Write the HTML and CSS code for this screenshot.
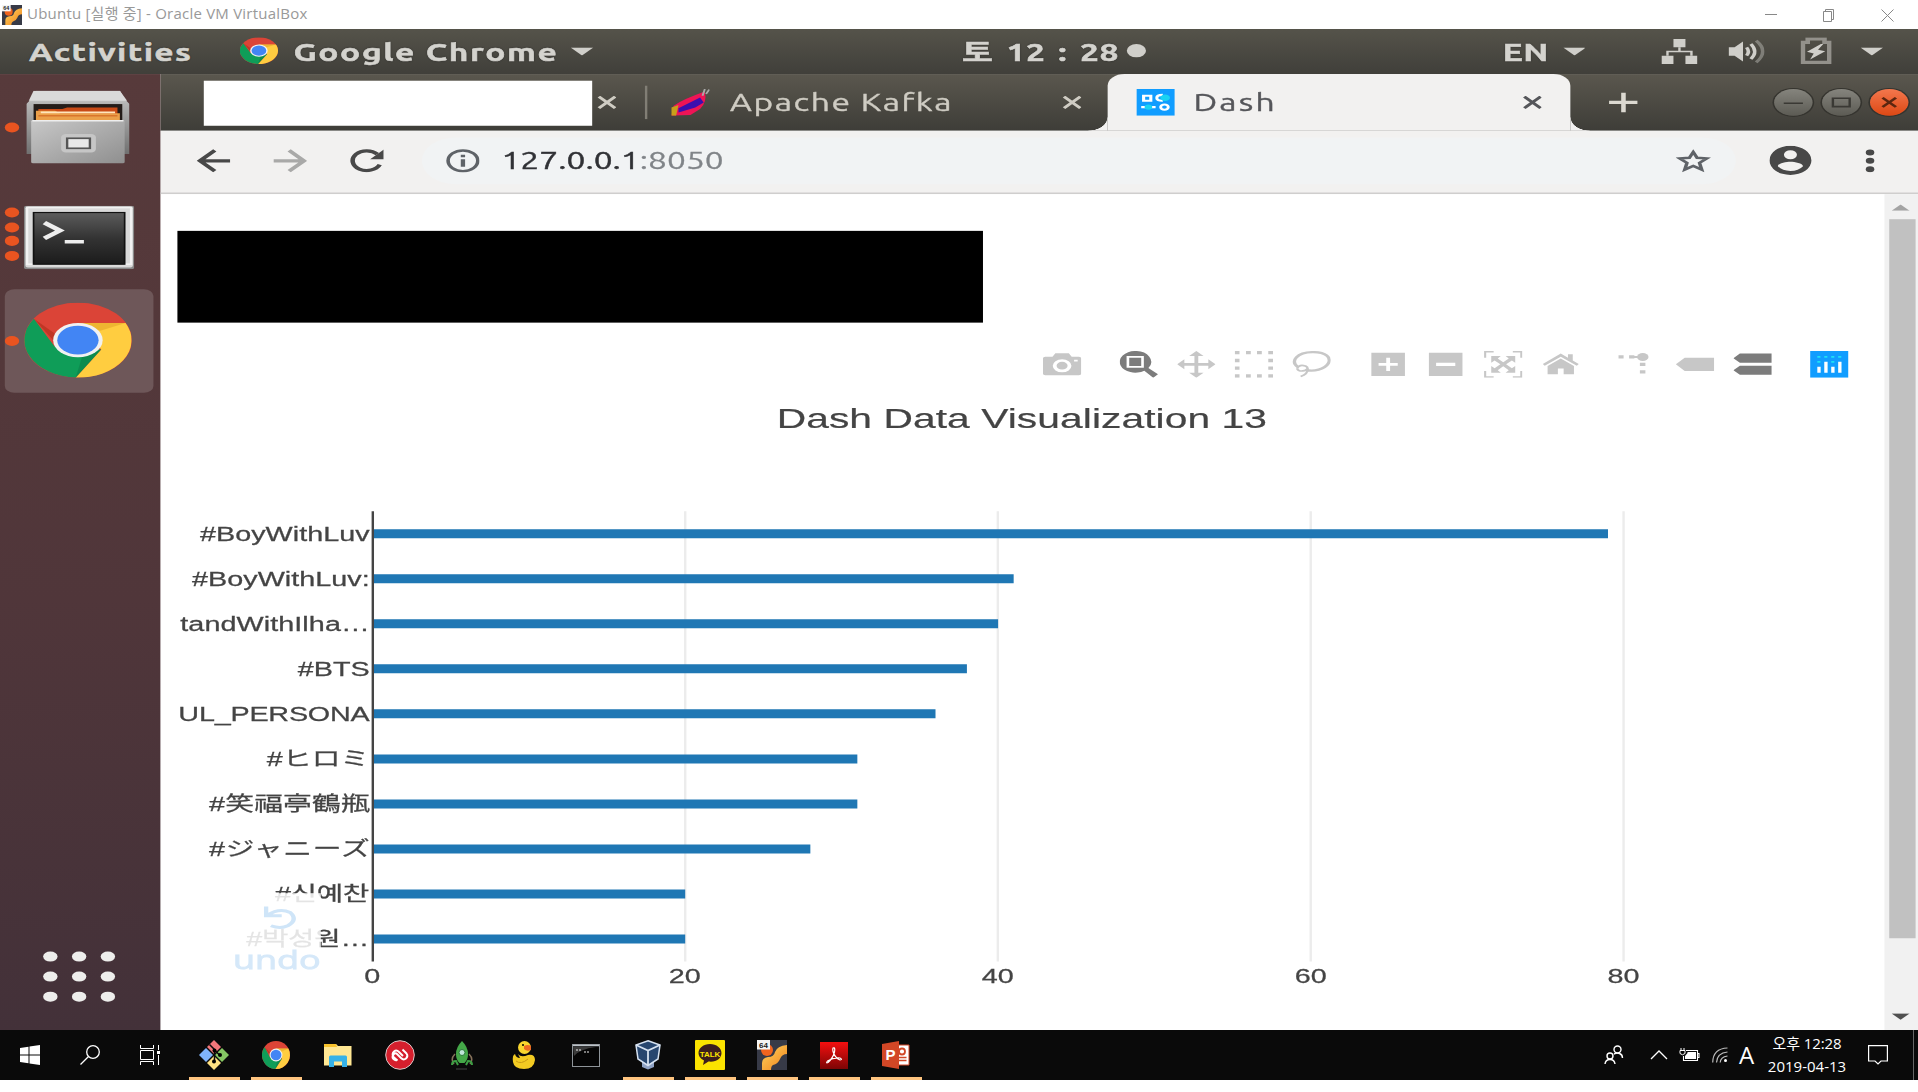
FILE: index.html
```html
<!DOCTYPE html>
<html lang="ko">
<head>
<meta charset="utf-8">
<title>Ubuntu - Oracle VM VirtualBox</title>
<link rel="stylesheet" href="styles.css">
</head>
<body>
<svg class="defs" width="0" height="0">
  <defs>
    <linearGradient id="metal" x1="0" y1="0" x2="1" y2="1"><stop offset="0" stop-color="#c8c8c8"/><stop offset="1" stop-color="#8f8f8f"/></linearGradient>
    <linearGradient id="side" x1="0" y1="0" x2="0" y2="1"><stop offset="0" stop-color="#e0e0e0"/><stop offset=".2" stop-color="#b5b5b5"/><stop offset="1" stop-color="#707070"/></linearGradient>
    <linearGradient id="term" x1="0" y1="0" x2="0" y2="1"><stop offset="0" stop-color="#5c5c5c"/><stop offset=".5" stop-color="#333"/><stop offset="1" stop-color="#1b1b1b"/></linearGradient>
    <linearGradient id="red" x1="0" y1="0" x2="0" y2="1"><stop offset="0" stop-color="#f50f0f"/><stop offset="1" stop-color="#7c0505"/></linearGradient>
    <linearGradient id="vm" x1="0" y1="0" x2="1" y2="1"><stop offset="0" stop-color="#ffd65e"/><stop offset="1" stop-color="#f0811c"/></linearGradient>
    <symbol id="chrome" viewBox="0 0 48 48">
      <circle cx="24" cy="24" r="24" fill="#db4437"/>
      <path d="M4.400 10.400A24 24 0 0 0 23 48L34.400 30H24L13.600 28Z" fill="#0f9d58"/>
      <path d="M23 48A24 24 0 0 0 45.200 13H24L34.400 30Z" fill="#ffcd40"/>
      <path d="M24 13H45.200L34 18Z" fill="#d99b20" opacity=".45"/>
      <path d="M4.400 10.400L13.600 25L14 20Z" fill="#a52714" opacity=".5"/>
      <path d="M23 48L34.400 30L26 34Z" fill="#0a7040" opacity=".4"/>
      <circle cx="24" cy="24" r="11" fill="#f1f1f1"/><circle cx="24" cy="24" r="9.200" fill="#4285f4"/>
    </symbol>
    <symbol id="cross" viewBox="0 0 8 8"><path d="M.6.6L7.400 7.400M7.400.6L.6 7.400" fill="none" stroke="currentColor" stroke-width="1.500"/></symbol>
    <symbol id="tri" viewBox="0 0 10 5"><path d="M0 0H10L5 5Z" fill="currentColor"/></symbol>
    <symbol id="vmware" viewBox="0 0 30 30">
      <rect width="30" height="30" fill="#373a47"/><circle cx="10" cy="10" r="6" fill="#f0641e"/>
      <path d="M5 30V23Q5 18 11 17Q17 17 18 12Q20 6 30 5V14Q25 14 23 19Q21 24 16 25Q14 26 14 30Z" fill="url(#vm)"/>
      <rect width="13" height="9.500" fill="#f4f4f4"/><text x="6.500" y="7.600" text-anchor="middle" class="vm-num">64</text>
    </symbol>
  </defs>
</svg>

<header class="titlebar">
  <svg class="app" width="20" height="20"><use href="#vmware"/></svg>
  <span class="title">Ubuntu [실행 중] - Oracle VM VirtualBox</span>
  <svg class="controls" width="130" height="14" viewBox="0 0 130 14" fill="none" stroke="#888"><path d="M1 6.500H13M59.500 3.500H67.500V13.500H59.500ZM61.500 3.500V1.500H69.500V11.500H67.500M117.500 1.500L129.500 13.500M129.500 1.500L117.500 13.500"/></svg>
</header>

<div class="screen">
<div class="guest">
  <nav class="topbar">
    <b class="activities">Activities</b>
    <svg class="chrome-mini" width="16" height="16"><use href="#chrome"/></svg>
    <b class="appname">Google Chrome</b>
    <svg class="caret c1" width="9.500" height="5"><use href="#tri"/></svg>
    <b class="clock">토 12 : 28</b>
    <i class="notify"></i>
    <b class="lang">EN</b>
    <svg class="caret c2" width="9.500" height="5"><use href="#tri"/></svg>
    <svg class="net" width="15" height="15" viewBox="0 0 15 15"><path d="M5 0h5v5H5zM0 10h5v5H0zM10 10h5v5h-5z" fill="#d0cfca"/><path d="M7.500 5V7.500M2.500 10V7.500H12.500V10" fill="none" stroke="#d0cfca"/></svg>
    <svg class="vol" width="15" height="15" viewBox="0 0 15 15"><path d="M0 5H2.500L6 1.500V13.500L2.500 10H0Z" fill="#d0cfca"/><g fill="none" stroke="#d0cfca" stroke-width="1.500"><path d="M7.500 5Q9 7.500 7.500 10"/><path d="M9.300 3Q12.500 7.500 9.300 12"/><path d="M11.500 1Q17 7.500 11.500 14" opacity=".4"/></g></svg>
    <svg class="bat" width="13" height="16" viewBox="0 0 13 16"><path d="M1 15V3H3V1H10V3H12V15Z" fill="none" stroke="#93918b" stroke-width="1.900"/><path d="M8.500 4L2.700 8.700L5.500 9.700L4 13.300L10.300 8.300L7.300 7.500L9.500 4Z" fill="#d0cfca"/></svg>
    <svg class="caret c3" width="9.500" height="5"><use href="#tri"/></svg>
  </nav>

  <div class="workspace">
    <aside class="dock">
      <div class="launcher files">
        <span class="dots"><i></i></span>
        <svg width="43" height="44" viewBox="0 0 43 44">
          <path d="M2 5L4 0H39L41 5L43 8V38H0V8Z" fill="url(#side)"/><path d="M3 0H39L42 6H1Z" fill="#dadada"/>
          <rect x="3" y="8" width="37" height="12" fill="#241c19"/>
          <path d="M5 11H15L17 10H38V20H5Z" fill="#c94a16"/><path d="M4 12H12L14 13.500H39V20H4Z" fill="#eba04a"/><path d="M6 13H37" stroke="#ffe5bd"/><path d="M5 15H38" stroke="#d9752c" stroke-width=".8"/>
          <rect x="2" y="17.500" width="39" height="26" rx=".8" fill="url(#metal)"/><path d="M2.500 18H40.500" stroke="#eee"/>
          <rect x="14.500" y="26" width="14.500" height="11" rx="2" fill="#c6c6c6"/><rect x="17" y="28.500" width="9.500" height="6" fill="#e8e8e8" stroke="#555"/>
        </svg>
      </div>
      <div class="launcher terminal">
        <span class="dots"><i></i><i></i><i></i><i></i></span>
        <svg width="46" height="38" viewBox="0 0 46 38">
          <rect width="46" height="38" rx="1" fill="#888"/><rect x=".6" y=".4" width="44.800" height="36.500" rx="1" fill="#d9d9d9"/><rect x="1.300" y="1" width="43.400" height="34" fill="none" stroke="#f2f2f2"/>
          <rect x="4" y="4" width="38" height="31" fill="url(#term)" stroke="#111" stroke-width=".7"/>
          <path d="M8.500 10L15 14.800L8.500 19.500" fill="none" stroke="#eee" stroke-width="2.400"/><path d="M17 21.500H25" stroke="#eee" stroke-width="2"/>
        </svg>
      </div>
      <div class="launcher active">
        <span class="dots"><i></i></span>
        <svg width="45" height="45"><use href="#chrome"/></svg>
      </div>
      <div class="apps"><i></i><i></i><i></i><i></i><i></i><i></i><i></i><i></i><i></i></div>
    </aside>

    <main class="browser">
      <div class="tabs">
        <div class="blank"></div>
        <svg class="x x1" width="8.400" height="8"><use href="#cross"/></svg>
        <i class="sep"></i>
        <svg class="kafka" width="16" height="16" viewBox="0 0 16 16"><path d="M0 16L1 10Q5 6 14 1.500Q15 8 12 12L8 15.500Z" fill="#ee1456"/><path d="M0 16V11L3 9.500L2 16Z" fill="#c8a01a"/><path d="M3 11.500L12 5L13.500 8L10 11L3 14Z" fill="#3b0fae"/><path d="M13 4L14 0M14.500 3L15.800 .3" stroke="#aaa" stroke-width=".8"/></svg>
        <span class="tabname t1">Apache Kafka</span>
        <svg class="x x2" width="8.400" height="8"><use href="#cross"/></svg>
        <div class="current">
          <svg width="16" height="16" viewBox="0 0 16 16"><path d="M0 0H16V16H0Z" fill="#119dff"/><path d="M3 4H6V7H3Z" fill="none" stroke="#fff" stroke-width="1.300"/><path d="M11 3.500Q8.500 3.500 8.500 5.300T11 7" fill="none" stroke="#fff" stroke-width="1.300"/><circle cx="12" cy="5.200" r="2" fill="#19d3f3"/><path d="M2 10.800H8" stroke="#fff" stroke-width="1.300"/><circle cx="5" cy="10.800" r="1.600" fill="#19d3f3"/><circle cx="11.700" cy="10.800" r="1.600" fill="none" stroke="#fff" stroke-width="1.200"/></svg>
          <span class="tabname t2">Dash</span>
          <svg class="x x3" width="8.400" height="8"><use href="#cross"/></svg>
        </div>
        <svg class="plus" width="12.300" height="12" viewBox="0 0 12 12"><path d="M6 0V12M0 6H12" stroke="#dcd9d1" stroke-width="1.900"/></svg>
        <div class="wm">
          <span><svg width="16" height="16" viewBox="0 0 16 16" fill="none" stroke="#3a3934"><path d="M4 8.500H12"/></svg></span>
          <span><svg width="16" height="16" viewBox="0 0 16 16" fill="none" stroke="#3a3934"><path d="M4.500 5.500H11.500V10.500H4.500Z"/></svg></span>
          <span class="close"><svg width="16" height="16" viewBox="0 0 16 16" fill="none" stroke="#5c2610" stroke-width="1.300"><path d="M5.200 5.200L10.800 10.800M10.800 5.200L5.200 10.800"/></svg></span>
        </div>
      </div>

      <div class="toolbar">
        <svg class="back" width="14.200" height="14" viewBox="0 0 14 14" fill="none" stroke="#484848" stroke-width="1.900"><path d="M14 7H1.500M7.500 .8L1.300 7L7.500 13.200"/></svg>
        <svg class="fwd" width="14.200" height="14" viewBox="0 0 14 14" fill="none" stroke="#a9a9a8" stroke-width="1.900"><path d="M0 7H12.500M6.500 .8L12.700 7L6.500 13.200"/></svg>
        <svg class="reload" width="14.200" height="14" viewBox="0 0 14 14"><path d="M12.300 9.300A5.900 5.900 0 1 1 11.300 3" fill="none" stroke="#484848" stroke-width="1.900"/><path d="M14 .3V6H8.300Z" fill="#484848"/></svg>
        <div class="omnibox">
          <svg width="14.200" height="14" viewBox="0 0 14 14"><circle cx="7" cy="7" r="6.200" fill="none" stroke="#5f6368" stroke-width="1.500"/><path d="M7 6V10.500M7 3.300V4.900" stroke="#5f6368" stroke-width="1.800"/></svg>
          <span class="url">127.0.0.1<em>:8050</em></span>
          <svg class="star" width="14.500" height="14" viewBox="0 0 20 19" fill="none" stroke="#5f6368" stroke-width="2"><path d="M10 2.300L12.200 7L17.800 7.500L13.600 11.200L14.900 16.800L10 13.800L5.100 16.800L6.400 11.200L2.200 7.500L7.800 7Z"/></svg>
        </div>
        <svg class="user" width="17.600" height="17.500" viewBox="0 0 20 20"><path fill="#484848" fill-rule="evenodd" d="M10 0a10 10 0 1 0 0 20a10 10 0 0 0 0-20zm0 3a3.100 3.100 0 1 1 0 6.200a3.100 3.100 0 0 1 0-6.200zm0 14.200a7.200 7.200 0 0 1-6-3.200c0-2 4-3.100 6-3.100s6 1.100 6 3.100a7.200 7.200 0 0 1-6 3.200z"/></svg>
        <svg class="menu" width="4" height="14" viewBox="0 0 4 14" fill="#484848"><circle cx="2" cy="2" r="1.800"/><circle cx="2" cy="7" r="1.800"/><circle cx="2" cy="12" r="1.800"/></svg>
      </div>

      <div class="viewport">
        <div class="page">
          <div class="heading"></div>
          <div class="modebar">
            <div class="group">
              <svg viewBox="0 0 16 16"><path fill-rule="evenodd" d="M1 3.500H4L5.200 1.300H10.800L12 3.500H15Q16 3.500 16 4.500V13.500Q16 14.500 15 14.500H1Q0 14.500 0 13.500V4.500Q0 3.500 1 3.500ZM8 5a3.900 3.900 0 1 0 0 7.800a3.900 3.900 0 0 0 0-7.800zM8 6.500a2.300 2.300 0 1 1 0 4.600a2.300 2.300 0 0 1 0-4.600zM13 5.300h1.500v1H13z"/></svg>
            </div>
            <div class="group">
              <svg class="on" viewBox="0 0 16 16"><path fill-rule="evenodd" d="M6.500 0a6.500 6.500 0 1 0 3.800 11.800L14 16L16 14L12 10.200A6.500 6.500 0 0 0 6.500 0zM2.900 3H10.100V10H2.900ZM4 4V9H9V4Z"/></svg>
              <svg viewBox="0 0 16 16"><path d="M8 0L11 3H8.800V7.200H13V5L16 8L13 11V8.800H8.800V13H11L8 16L5 13H7.200V8.800H3V11L0 8L3 5V7.200H7.200V3H5Z"/></svg>
              <svg viewBox="0 0 16 16"><path d="M0 0h2v2H0zM4.700 0h2v2h-2zM9.300 0h2v2h-2zM14 0h2v2h-2zM0 4.700h2v2H0zM14 4.700h2v2h-2zM0 9.300h2v2H0zM14 9.300h2v2h-2zM0 14h2v2H0zM4.700 14h2v2h-2zM9.300 14h2v2h-2zM14 14h2v2h-2z"/></svg>
              <svg viewBox="0 0 16 16" class="line"><path d="M2.300 9.600C-1 6 2 .8 8.500.7C14 .6 16.500 4 15 7.500C13.500 11 9 12.600 5.500 11.300"/><path d="M2 10.500Q3 7.800 5.500 9Q7.500 10.500 5 11.800Q2.500 12.500 2 10.500M6.500 10.500Q6.500 14 3.500 15.300" stroke-width="1"/></svg>
            </div>
            <div class="group">
              <svg viewBox="0 0 16 16"><path fill-rule="evenodd" d="M1 1H15V15H1ZM7.200 4V7.200H4V8.800H7.200V12H8.800V8.800H12V7.200H8.800V4Z"/></svg>
              <svg viewBox="0 0 16 16"><path fill-rule="evenodd" d="M1 1H15V15H1ZM4 7V9H12V7Z"/></svg>
              <svg viewBox="0 0 16 16"><path d="M0 0H4V.9H.9V4H0ZM12 0H16V4H15.100V.9H12ZM0 12H.9V15.100H4V16H0ZM15.100 12H16V16H12V15.100H15.100Z"/><path d="M3 3H7L5.700 4.500L8 6.800L10.300 4.500L9 3H13V7L11.600 5.700L9.200 8L11.600 10.300L13 9V13H9L10.300 11.500L8 9.200L5.700 11.500L7 13H3V9L4.400 10.300L6.800 8L4.400 5.700L3 7Z"/></svg>
              <svg viewBox="0 0 16 16"><path d="M8 1.500L11 4V2H13V5.700L15.500 7.800L14.700 8.800L8 3.500L1.300 8.800L.5 7.800ZM8 4.500L13.500 9V14H9.200V10.500H6.800V14H2.500V9Z"/></svg>
            </div>
            <div class="group">
              <svg viewBox="0 0 16 16"><path d="M0 2.500h2.200v2H0zM4.500 2.500h2.200v2H4.500zM6.500 3H9V4.200H6.500zM9 7h2.300v2H9zM9 11.500h2.300v2H9z"/><circle cx="10.200" cy="3.600" r="2.400"/></svg>
              <svg viewBox="0 0 16 16"><path d="M0 8L3.700 4H16V12H3.700Z"/></svg>
              <svg class="on" viewBox="0 0 16 16"><path d="M0 4.300L2.700 1.500H16V7H2.700ZM0 11.500L2.700 8.800H16V14.300H2.700Z"/></svg>
            </div>
            <div class="group">
              <svg viewBox="0 0 16 16"><path d="M0 0H16V16H0Z" fill="#119dff"/><path d="M3 9.500h1.400V13H3zM5.900 6.500h1.400V13H5.900zM8.800 9.500h1.400V13H8.800zM11.700 6.500h1.400V13h-1.400z" fill="#fff"/><path d="M3 3h1.300v1H3zM5.900 3h1.300v1H5.900zM8.800 3h1.300v1H8.800zM11.700 3H13v1h-1.300zM3 6h1.300v1H3zM8.800 6h1.300v1H8.800z" fill="#1fe0f5"/></svg>
            </div>
          </div>
          <svg class="chart" width="719" height="391" viewBox="67 209 719 391">
            <text class="chart-title" x="426.200" y="239" text-anchor="middle" textLength="204.500">Dash Data Visualization 13</text>
            <path class="grid" d="M285.800 289V559M416.200 289V559M546.700 289V559M677.200 289V559"/>
            <g class="bars">
              <path d="M155.400 299.800h515.300v5.400H155.400zM155.400 326.800h267.400v5.400H155.400zM155.400 353.800h260.900v5.400H155.400zM155.400 380.800h247.900v5.400H155.400zM155.400 407.800h234.800v5.400H155.400zM155.400 434.800h202.200v5.400H155.400zM155.400 461.800h202.200v5.400H155.400zM155.400 488.800h182.600v5.400H155.400zM155.400 515.800h130.400v5.400H155.400zM155.400 542.800h130.400v5.400H155.400z"/>
            </g>
            <path class="zero" d="M155.500 289V559"/>
            <g class="labels" text-anchor="end">
              <text x="154.200" y="306.700" textLength="70.800">#BoyWithLuv</text>
              <text x="154.200" y="333.700" textLength="74.100">#BoyWithLuv:</text>
              <text x="154.200" y="360.700" textLength="79">tandWithIlha…</text>
              <text x="154.200" y="387.700">#BTS</text>
              <svg x="75" y="400" width="85" height="22" viewBox="75 400 85 22"><text x="154.200" y="414.700" textLength="79.800">UL_PERSONA</text></svg>
              <text x="154" y="441.700" textLength="42.700">#ヒロミ</text>
              <text x="154.200" y="468.700" textLength="67">#笑福亭鶴瓶</text>
              <text x="154.200" y="495.700" textLength="67">#ジャニーズ</text>
              <text x="154" y="522.700" lang="ko" textLength="39.300">#신예찬</text>
              <text x="154" y="549.700" lang="ko" textLength="51.300">#박성원…</text>
            </g>
            <g class="ticks" text-anchor="middle"><text x="155.300" y="571.700">0</text><text x="285.600" y="571.700">20</text><text x="416.200" y="571.700">40</text><text x="546.700" y="571.700">60</text><text x="677.200" y="571.700">80</text></g>
            <g class="undo"><rect x="90" y="518" width="43.800" height="52" fill="#fff" opacity=".86"/><path d="M111 526V531.500H117.500M111.500 531.200Q116.500 526.500 121 529.500Q124.500 534 120 537.500Q117 539.500 113 537.500" fill="none" stroke="#cfe5f8" stroke-width="1.800"/><text x="97.200" y="563.600" textLength="36.500">undo</text></g>
          </svg>
        </div>
        <div class="scroll"><svg class="up" width="7.500" height="4" viewBox="0 0 10 5"><path d="M0 5H10L5 0Z" fill="#a3a3a3"/></svg><i></i><svg class="down" width="7.500" height="4" viewBox="0 0 10 5"><path d="M0 0H10L5 5Z" fill="#505050"/></svg></div>
      </div>
    </main>
  </div>
</div>
</div>

<footer class="taskbar">
  <div class="sys"><svg width="20" height="20" viewBox="0 0 20 20" fill="#fff"><path d="M0 3L8.500 1.800V9.500H0ZM9.500 1.600L20 0V9.500H9.500ZM0 10.500H8.500V18.200L0 17ZM9.500 10.500H20V20L9.500 18.400Z"/></svg></div>
  <div class="sys"><svg width="20" height="20" viewBox="0 0 20 20" fill="none" stroke="#fff" stroke-width="1.300"><circle cx="13" cy="7" r="6.300"/><path d="M8.500 11.500L.5 19.500"/></svg></div>
  <div class="sys"><svg width="21" height="20" viewBox="0 0 21 20" fill="none" stroke="#fff"><path d="M.5 0V3.500H13.500V0M.5 5.500H13.500V14.500H.5ZM.5 20V16.500H13.500V20M18.500 0V5M18.500 10V20"/><path d="M17 6h3v3h-3z" fill="#fff" stroke="none"/></svg></div>
  <div class="task run first"><svg width="30" height="30" viewBox="0 0 30 30"><path d="M15 0L22 7L15 14L8 7Z" fill="#f4777b"/><path d="M23 8L30 15L23 22L16 15Z" fill="#85c763"/><path d="M7 8L14 15L7 22L0 15Z" fill="#80b3fb"/><path d="M15 16L22 23L15 30L8 23Z" fill="#ffe182"/><path d="M10.500 4.500L15.500 9.500V22M15.500 10L21 15.500" stroke="#0a0a0a" stroke-width="1.500" fill="none"/><circle cx="15.500" cy="10.500" r="2"/><circle cx="21" cy="15" r="2"/><circle cx="15" cy="21.500" r="2"/></svg></div>
  <div class="task run"><svg width="28" height="28"><use href="#chrome"/></svg></div>
  <div class="task"><svg width="28" height="24" viewBox="0 0 28 24"><path d="M0 1H12L14 3H27.500V22.500H0Z" fill="#ffe793"/><path d="M0 1H12L13 4H0Z" fill="#f8c22c"/><path d="M5 24V14Q5 12.500 6.500 12.500H21.500Q23 12.500 23 14V24H18V18.500H10V24Z" fill="#36b2e8"/></svg></div>
  <div class="task"><svg width="30" height="30" viewBox="0 0 30 30"><circle cx="15" cy="15" r="14.300" fill="#d61f2d" stroke="#d9c7c7"/><path d="M17.500 9.500L21.500 13.500Q23.500 16 21 18.500Q18.500 20.500 16 18L12 14Q10.500 12.500 8.500 14.500Q6.500 17 8.500 19Q10.500 21 12.500 19.500M12.500 20.500L8.500 17Q6.500 14 9 11.500Q11.500 9.500 14 12L18 16" fill="none" stroke="#fff" stroke-width="1.900"/></svg></div>
  <div class="task"><svg width="24" height="30" viewBox="0 0 24 30"><path d="M12 1Q18 7 18 14Q18 20 14.500 23H9.500Q6 20 6 14Q6 7 12 1Z" fill="#44a848"/><circle cx="12" cy="12.500" r="3" fill="#bfe5d9" stroke="#2a7a3a"/><path d="M5 14Q0 19 4 24M19 14Q24 19 20 24" fill="none" stroke="#87725b" stroke-width="1.500"/><path d="M2 25Q2 21 6 21L8 25M22 25Q22 21 18 21L16 25" fill="none" stroke="#3c9e43" stroke-width="2"/><path d="M6 29H17" stroke="#444"/></svg></div>
  <div class="task"><svg width="24" height="30" viewBox="0 0 24 30"><circle cx="12.500" cy="7.500" r="6.500" fill="#f9d62e"/><path d="M6 14Q9 18 16 15Q23 14 23 20Q22 29 12 29Q2 29 1 22Q0 15 3 14Q4 18 8 18Z" fill="#f3cb22"/><path d="M12 6Q16 4 19 6V10Q15 12 12 9Z" fill="#ec6a24"/><circle cx="11" cy="5" r="1"/><path d="M4 21Q9 25 16 19" stroke="#c99b15" fill="none"/></svg></div>
  <div class="task"><svg width="28" height="23" viewBox="0 0 28 23"><rect x=".5" y=".5" width="27" height="22" fill="#050505" stroke="#8e9499"/><path d="M1 1.500H27" stroke="#bcc3c8" stroke-width="1.500"/><path d="M1 3H24Q8 5 2 12Z" fill="#3b3b3b"/><path d="M4 6H9M12 8H17" stroke="#eee" stroke-dasharray="2 1"/></svg></div>
  <div class="task run"><svg width="26" height="30" viewBox="0 0 26 30"><path d="M7 20L13 24L19 20V27L13 29.500L7 27Z" fill="#8fa2c4"/><path d="M13 .8L25 5L23 19L13 25.500L3 19L1 5Z" fill="#27466f" stroke="#d5e1f0" stroke-width="1.500"/><path d="M1 5L13 10.500L25 5M13 10.500V25" stroke="#d5e1f0" stroke-width="1.800" fill="none"/></svg></div>
  <div class="task run"><svg width="30" height="30" viewBox="0 0 30 30"><rect width="30" height="30" rx="1" fill="#fbe300"/><path d="M15 4C8.500 4 3.500 8 3.500 13Q3.500 18 9 20.500L8 25L13.500 21.500C21 22.500 26.500 18.500 26.500 13C26.500 8 21.500 4 15 4Z" fill="#3b1e1e"/><text x="15" y="16.500" text-anchor="middle" class="talk">TALK</text></svg></div>
  <div class="task run"><svg width="30" height="30"><use href="#vmware"/></svg></div>
  <div class="task run"><svg width="28" height="27" viewBox="0 0 28 27"><rect width="28" height="27" fill="url(#red)"/><path d="M13 6Q15.500 5 14.500 10Q13 16 8 20.500Q5.500 21.500 7.500 19Q13 15.500 20 16Q23 17.500 20 18Q15 16 13 9.500Q12.500 7 13 6Z" fill="none" stroke="#fff" stroke-width="1.200"/></svg></div>
  <div class="task run"><svg width="28" height="28" viewBox="0 0 28 28"><path d="M14 4H27V24H14Z" fill="#fff" stroke="#d24726"/><path d="M17 16.500H24.500M17 19.500H24.500" stroke="#d24726" stroke-width="1.300"/><circle cx="20" cy="10.500" r="3" fill="none" stroke="#d24726" stroke-width="1.800"/><path d="M0 3L17 0V28L0 25Z" fill="#d24726"/><text x="8.500" y="19" text-anchor="middle" class="ppt">P</text></svg></div>
  <div class="tray">
    <svg class="people" width="20" height="20" viewBox="0 0 20 20" fill="none" stroke="#fff" stroke-width="1.400"><circle cx="13.500" cy="4.500" r="3.500"/><circle cx="6" cy="11" r="3"/><path d="M1 19Q1.500 14.500 6 14.500T11 19M10 9Q13 7.500 15.500 8.500Q18.500 9.500 18.500 13"/></svg>
    <svg class="chev" width="18" height="10" viewBox="0 0 18 10" fill="none" stroke="#fff" stroke-width="1.300"><path d="M1 9L9 1L17 9"/></svg>
    <svg class="power" width="21" height="14" viewBox="0 0 21 14"><path d="M7 2.500H18.500V12.500H4.500V8M18.500 5.500H20V9.500H18.500" fill="none" stroke="#fff" stroke-width="1.100"/><path d="M8.500 4H17V11H6V8L8.500 5Z" fill="#fff"/><path d="M1 2.500H6V5.500Q3.500 8 1 5.500ZM2 0V2.500M5 0V2.500" stroke="#fff" fill="none"/></svg>
    <svg class="wifi" width="16" height="16" viewBox="0 0 16 16" fill="none" stroke="#bbb" stroke-width="1.200"><path d="M.7 15.500Q1 1.500 15.500 1M4.500 15.500Q5 6 15.500 5M8.200 15.500Q8.500 10 15.500 9"/><circle cx="13.500" cy="13.500" r="1.500" fill="#fff" stroke="none"/></svg>
    <span class="ime">A</span>
    <div class="time"><span class="hm">오후 12:28</span><span>2019-04-13</span></div>
    <svg class="action" width="20" height="20" viewBox="0 0 20 20" fill="none" stroke="#fff" stroke-width="1.200"><path d="M.6.600H19.400V16H13L10 19L7 16H.6Z"/></svg>
    <i class="peek"></i>
  </div>
</footer>
</body>
</html>
```
FILE: styles.css
```css
* { box-sizing: border-box; }
body { margin: 0; width: 1918px; height: 1092px; overflow: hidden; background: #fff; font-family: "Open Sans", "Noto Sans CJK KR", sans-serif; }
svg { display: block; flex: none; }
.defs { position: absolute; }
i, em { font-style: normal; }

/* host window */
.titlebar { height: 29px; display: flex; align-items: center; padding: 0 24px 0 2px; }
.app { margin-right: 5px; }
.title { width: 290px; font-size: 15px; line-height: 27px; letter-spacing: .22px; color: #999; white-space: nowrap; margin-top: -2px; }
.controls { margin-left: auto; }
.vm-num { font: bold 8px "Liberation Sans", sans-serif; fill: #222; }

/* 800x600 guest display stretched over the window */
.screen { width: 1918px; height: 1001px; overflow: hidden; }
.guest { width: 800px; height: 600px; transform: scale(2.3975, 1.66833); transform-origin: 0 0; font-family: "Ubuntu", "Noto Sans", "Noto Sans CJK KR", sans-serif; }

.topbar { height: 27px; display: flex; align-items: center; background: linear-gradient(#55534a, #403f3a); color: #d4d3ce; font-size: 14px; line-height: 27px; white-space: nowrap; }
.topbar b { flex: none; font-weight: 700; padding-top: 1px; -webkit-text-stroke: .3px #d4d3ce; text-shadow: 0 0 1px #222; }
.topbar .activities { width: 68px; margin-left: 12.1px; letter-spacing: .58px; }
.chrome-mini { margin-left: 20.400px; margin-top: -1px; }
.topbar .appname { width: 110px; margin-left: 5.9px; letter-spacing: .68px; }
.caret { color: #d0cfca; }
.c1 { margin-left: 6.1px; }
.topbar .clock { width: 65px; margin-left: 153.3px; padding-top: 2px; letter-spacing: .25px; word-spacing: 1.8px; }
.notify { width: 8px; height: 8px; border-radius: 50%; background: #d0cfca; margin-left: 4px; margin-top: -1px; }
.topbar .lang { width: 19px; margin-left: 148.5px; letter-spacing: .3px; }
.c2 { margin-left: 6px; }
.net { margin-left: 32px; }
.vol { margin-left: 13.2px; margin-top: -1px; }
.bat { margin-left: 14.6px; margin-top: -1px; }
.c3 { margin-left: 12px; }

.workspace { display: flex; height: 573px; }
.dock { width: 67px; display: flex; flex-direction: column; background: linear-gradient(#573a3b, #50363a 55%, #433139); }
.launcher { position: relative; display: flex; justify-content: center; align-items: center; width: 62px; margin-left: 2px; }
.launcher > svg { margin-right: .6px; }
.dots { position: absolute; left: -.3px; top: 0; height: 100%; display: flex; flex-direction: column; justify-content: center; gap: 2.5px; }
.dots i { width: 6px; height: 6px; border-radius: 50%; background: #e95420; }
.files { height: 44px; margin-top: 10px; }
.terminal { height: 38px; margin-top: 25px; }
.terminal .dots { top: -2px; }
.active { height: 62px; margin-top: 12px; background: #6e5759; border-radius: 4px; }
.active > svg { margin-top: -1px; }
.apps { margin: auto 0 17px 18px; display: grid; grid-template-columns: repeat(3, 6px); gap: 6px; }
.apps i { height: 6px; border-radius: 50%; background: #eeeeec; }

.browser { width: 733px; display: flex; flex-direction: column; }
.tabs { height: 34px; display: flex; align-items: center; background: linear-gradient(#5a574e, #3e3d38); color: #cfccc3; }
.blank { width: 162.4px; height: 27px; margin-left: 17.7px; background: #fff; }
.x1 { margin-left: 1.9px; }
.sep { width: .6px; height: 20px; margin-left: 11.2px; background: #817e75; }
.kafka { margin-left: 11.1px; }
.tabname { font-size: 14px; line-height: 34px; white-space: nowrap; flex: none; -webkit-text-stroke: .2px currentColor; }
.t1 { width: 92.2px; margin-left: 8.3px; letter-spacing: .65px; }
.x2 { margin-left: 45.8px; }
.current { position: relative; width: 193.3px; height: 34px; margin-left: 10.8px; padding-left: 11.9px; display: flex; align-items: center; background: #f2f1f0; border-radius: 7px 7px 0 0; color: #55565a; }
.current::before, .current::after { content: ""; position: absolute; bottom: 0; width: 8px; height: 8px; }
.current::before { left: -8px; background: radial-gradient(circle at 0 0, transparent 7.7px, #f2f1f0 8px); }
.current::after { right: -8px; background: radial-gradient(circle at 100% 0, transparent 7.7px, #f2f1f0 8px); }
.t2 { width: 34px; margin-left: 8.2px; letter-spacing: .9px; }
.x3 { margin-left: 103.3px; }
.plus { margin-left: 15.5px; }
.wm { display: flex; gap: 4px; margin-left: 56.8px; }
.wm span { border-radius: 50%; background: linear-gradient(#85847d, #5c5b54); box-shadow: 0 0 0 .7px #35342f; }
.wm .close { background: linear-gradient(#f3774d, #dd4814); }

.toolbar { height: 38px; display: flex; align-items: center; background: #f2f1f0; border-bottom: 1px solid #cfcecd; padding-bottom: .8px; }
.back { margin-left: 15px; }
.fwd, .reload { margin-left: 17.8px; }
.omnibox { width: 548.5px; height: 28px; margin-left: 15.5px; padding-left: 10.3px; border-radius: 14px; background: #f1f3f4; display: flex; align-items: center; }
.url { width: 91px; margin-left: 9px; font-size: 14px; line-height: 28px; color: #303135; white-space: nowrap; -webkit-text-stroke: .25px currentColor; }
.url em { color: #808488; -webkit-text-stroke: .15px currentColor; }
.star { margin-left: auto; margin-right: 10.400px; }
.user { margin-left: 13.8px; }
.menu { margin-left: 22px; }

.viewport { flex: 1; display: flex; min-height: 0; background: #fff; }
.page { width: 719px; }
.heading { width: 335.3px; height: 55.1px; margin: 22.1px 0 16.8px 7.4px; background: #000; }
.modebar { height: 16px; display: flex; gap: 16px; padding-left: 368.1px; }
.group { display: flex; gap: 8px; }
.group svg { width: 16px; height: 16px; fill: #c7c7c7; }
.group .on { fill: #7c7c7c; }
.group .line { fill: none; stroke: #c7c7c7; stroke-width: 1.4; }
.chart-title { font: 17px "Liberation Sans", sans-serif; fill: #444; stroke: #444; stroke-width: .12px; }
.grid { stroke: #ececec; fill: none; }
.bars { fill: #1f77b4; }
.zero { stroke: #444; }
.labels, .ticks { font: 12px "Liberation Sans", "Noto Sans CJK JP", "Noto Sans CJK KR", sans-serif; fill: #444; stroke: #444; stroke-width: .15px; }
.undo text { font: 15px "Open Sans", sans-serif; fill: #d5e8f9; stroke: #d5e8f9; stroke-width: .5px; }
.scroll { width: 14px; display: flex; flex-direction: column; align-items: center; background: #f1f1f1; padding-left: .4px; }
.scroll i { width: 11.2px; height: 431px; margin-top: 5px; background: #c1c1c1; }
.up { margin-top: 6px; }
.down { margin-top: 45px; }

/* host taskbar */
.taskbar { height: 50px; display: flex; background: #0a0a0a; }
.sys { width: 60px; display: flex; align-items: center; justify-content: center; }
.task { width: 51px; margin-right: 11px; display: flex; align-items: center; justify-content: center; border-bottom: 3px solid transparent; padding-top: 3px; }
.task > svg { margin-right: 1.5px; }
.first { margin-left: 9px; }
.run { border-color: #ffc580; }
.talk { font: bold 8px "Liberation Sans", sans-serif; fill: #fbe300; }
.ppt { font: bold 15px "Liberation Sans", sans-serif; fill: #fff; }
.tray { flex: 1; display: flex; align-items: center; color: #fff; }
.people { margin-left: 671px; }
.chev { margin-left: 26px; }
.power { margin-left: 10.500px; }
.wifi { margin-left: 12.500px; }
.ime { width: 17px; margin-left: 11px; font-size: 24px; line-height: 46px; }
.time { width: 84px; margin-left: 9px; display: flex; flex-direction: column; text-align: center; font-size: 15px; line-height: 23px; letter-spacing: 0; white-space: nowrap; }
.hm { letter-spacing: -.1px; }
.action { margin-left: 19px; }
.peek { width: 1px; height: 50px; margin-left: 25px; background: #666; }
```
